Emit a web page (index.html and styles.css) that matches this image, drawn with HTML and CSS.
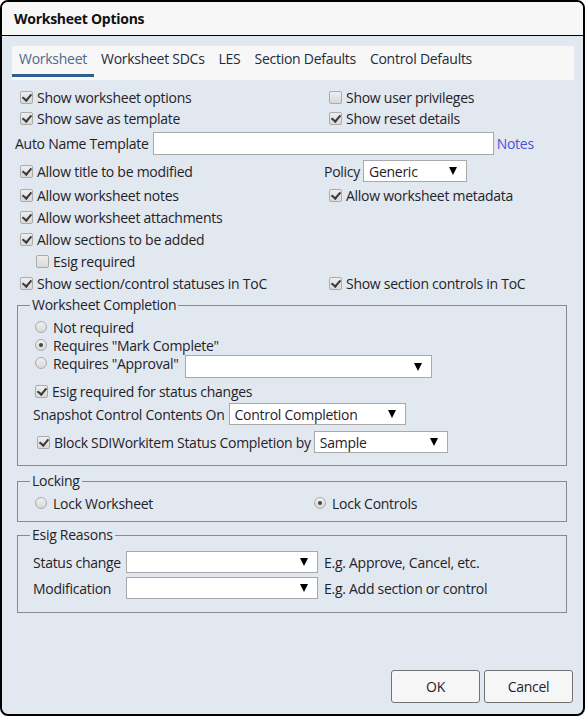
FILE: index.html
```html
<!DOCTYPE html>
<html>
<head>
<meta charset="utf-8">
<link rel="stylesheet" href="styles.css">
</head>
<body>
<div class="dialog">
  <div class="titlebar">Worksheet Options</div>
  <div class="body">
    <div class="tabs">
      <div class="tab active">Worksheet</div>
      <div class="tab">Worksheet SDCs</div>
      <div class="tab">LES</div>
      <div class="tab">Section Defaults</div>
      <div class="tab">Control Defaults</div>
    </div>

    <div class="opts">
      <div class="row r1">
        <div class="lcol"><span class="cb on"></span>Show worksheet options</div>
        <div class="rcol"><span class="cb"></span>Show user privileges</div>
      </div>
      <div class="row r2">
        <div class="lcol"><span class="cb on"></span>Show save as template</div>
        <div class="rcol"><span class="cb on"></span>Show reset details</div>
      </div>
      <div class="row autoname">
        <span class="autolabel">Auto Name Template</span>
        <span class="textbox"></span>
        <span class="link">Notes</span>
      </div>
      <div class="row r4">
        <div class="lcol"><span class="cb on"></span>Allow title to be modified</div>
        <div class="rcol plain">Policy <span class="select policy"><span class="val">Generic</span><span class="arrow"></span></span></div>
      </div>
      <div class="row">
        <div class="lcol"><span class="cb on"></span>Allow worksheet notes</div>
        <div class="rcol"><span class="cb on"></span>Allow worksheet metadata</div>
      </div>
      <div class="row">
        <div class="lcol"><span class="cb on"></span>Allow worksheet attachments</div>
      </div>
      <div class="row">
        <div class="lcol"><span class="cb on"></span>Allow sections to be added</div>
      </div>
      <div class="row">
        <div class="lcol indent"><span class="cb"></span>Esig required</div>
      </div>
      <div class="row">
        <div class="lcol"><span class="cb on"></span>Show section/control statuses in ToC</div>
        <div class="rcol"><span class="cb on"></span>Show section controls in ToC</div>
      </div>
    </div>

    <fieldset class="group completion">
      <legend>Worksheet Completion</legend>
      <div class="rrow"><span class="rb"></span>Not required</div>
      <div class="rrow"><span class="rb on"></span>Requires "Mark Complete"</div>
      <div class="rrow approval"><span class="rb"></span>Requires "Approval" <span class="select approvalsel"><span class="val"></span><span class="arrow"></span></span></div>
      <div class="crow esigstatus"><span class="cb on"></span>Esig required for status changes</div>
      <div class="crow snapshot">Snapshot Control Contents On <span class="select snapsel"><span class="val">Control Completion</span><span class="arrow"></span></span></div>
      <div class="crow block"><span class="cb on"></span>Block SDIWorkitem Status Completion by <span class="select samplesel"><span class="val">Sample</span><span class="arrow"></span></span></div>
    </fieldset>

    <fieldset class="group locking">
      <legend>Locking</legend>
      <div class="lockrow">
        <div class="lockcell"><span class="rb"></span>Lock Worksheet</div>
        <div class="lockcell"><span class="rb on"></span>Lock Controls</div>
      </div>
    </fieldset>

    <fieldset class="group reasons">
      <legend>Esig Reasons</legend>
      <div class="reasonrow">
        <span class="reasonlabel">Status change</span>
        <span class="select reasonsel"><span class="val"></span><span class="arrow"></span></span>
        <span class="hint">E.g. Approve, Cancel, etc.</span>
      </div>
      <div class="reasonrow second">
        <span class="reasonlabel">Modification</span>
        <span class="select reasonsel"><span class="val"></span><span class="arrow"></span></span>
        <span class="hint">E.g. Add section or control</span>
      </div>
    </fieldset>

    <div class="footer">
      <button class="btn">OK</button>
      <button class="btn">Cancel</button>
    </div>
  </div>
</div>
</body>
</html>
```
FILE: styles.css
```css
html, body {
  margin: 0;
  padding: 0;
  background: #ffffff;
}
* { box-sizing: border-box; }

.dialog {
  width: 585px;
  height: 716px;
  border: 2px solid #000;
  border-radius: 8px;
  overflow: hidden;
  background: #e2e8f0;
  display: flex;
  flex-direction: column;
  font-family: "Open Sans", "Noto Sans", sans-serif;
  font-size: 14px;
  letter-spacing: -0.27px;
  color: #1f2329;
}

.titlebar {
  height: 34px;
  line-height: 33px;
  background: #f7f7f7;
  border-bottom: 1px solid #000;
  padding-left: 12px;
  font-weight: bold;
  color: #111;
}

.body {
  flex: 1;
  display: flex;
  flex-direction: column;
  padding: 10px 9px 11px 10px;
}

.tabs {
  height: 34px;
  background: #f7f7f7;
  display: flex;
}
.tab {
  height: 31px;
  padding: 3px 7px 0 7px;
  line-height: 20px;
  border-bottom: 3px solid transparent;
  color: #1f2a3c;
}
.tab.active {
  color: #4e6a87;
  border-bottom-color: #2e5d90;
}

.opts {
  margin-top: 6px;
}
.row {
  display: flex;
  align-items: center;
  height: 22px;
}
.row.r2 { height: 21px; }
.row.autoname { height: 29px; }
.row.r4 { height: 26px; }

.lcol {
  width: 312px;
  flex: none;
  padding-left: 8px;
  display: flex;
  align-items: center;
}
.lcol.indent { padding-left: 24px; }
.rcol {
  padding-left: 5px;
  display: flex;
  align-items: center;
}
.rcol.plain { padding-left: 0; }

.cb {
  display: inline-block;
  position: relative;
  width: 13px;
  height: 13px;
  border: 1px solid #ababab;
  border-radius: 2px;
  background: linear-gradient(#eeeeee, #d9d9d9);
  margin-right: 4px;
  flex: none;
}
.cb.on::after {
  content: "";
  position: absolute;
  left: 3px;
  top: 0px;
  width: 4px;
  height: 7px;
  border-right: 2px solid #3a3a3a;
  border-bottom: 2px solid #3a3a3a;
  transform: rotate(40deg);
}

.rb {
  display: inline-block;
  position: relative;
  width: 12px;
  height: 12px;
  border: 1px solid #ababab;
  border-radius: 50%;
  background: linear-gradient(#efefef, #d9d9d9);
  margin-right: 6px;
  flex: none;
}
.rb.on::after {
  content: "";
  position: absolute;
  left: 3px;
  top: 3px;
  width: 4px;
  height: 4px;
  border-radius: 50%;
  background: #444;
}

.autolabel { padding-left: 3px; }
.textbox {
  display: inline-block;
  width: 341px;
  height: 23px;
  margin-left: 4px;
  background: #fff;
  border: 1px solid #a9a9a9;
}
.link {
  margin-left: 3px;
  color: #4f50d8;
}

.select {
  display: inline-flex;
  align-items: center;
  justify-content: space-between;
  height: 22px;
  background: #fff;
  border: 1px solid #a9a9a9;
  padding: 0 9px 0 5px;
  color: #1f2329;
  flex: none;
}
.arrow {
  width: 0;
  height: 0;
  border-left: 4px solid transparent;
  border-right: 4px solid transparent;
  border-top: 8px solid #000;
  flex: none;
}
.select.policy { width: 104px; margin-left: 3px; }
.select.approvalsel { width: 247px; margin-left: 6px; margin-top: 1px; height: 23px; }
.select.snapsel { width: 177px; margin-left: 4px; }
.select.samplesel { width: 134px; margin-left: 3px; padding-left: 5px; }
.select.reasonsel { width: 192px; }

.group {
  margin: 1px 7px 0 5px;
  border: 1px solid #8a8a8a;
  padding: 0 10px 12px 15px;
  min-width: 0;
}
.group legend {
  padding: 0 2px;
  margin-left: -3px;
  line-height: 20px;
}

.completion { padding-top: 3px; }
.rrow {
  display: flex;
  align-items: center;
  height: 18px;
  padding-left: 2px;
}
.rrow.approval {
  height: 24px;
  align-items: flex-start;
}
.rrow.approval .rb { margin-top: 3px; }
.crow {
  display: flex;
  align-items: center;
  height: 22px;
}
.crow.esigstatus { margin-top: 2px; padding-left: 2px; }
.crow.snapshot { margin-top: 1px; }
.crow.block { margin-top: 6px; padding-left: 4px; }

.locking {
  margin-top: 5px;
  padding-top: 1px;
  padding-bottom: 7px;
}
.lockrow {
  display: flex;
  height: 22px;
  align-items: center;
  padding-left: 2px;
}
.lockcell {
  display: flex;
  align-items: center;
  width: 279px;
  flex: none;
}

.reasons {
  margin-top: 3px;
  padding-top: 6px;
  padding-bottom: 13px;
}
.reasonrow {
  display: flex;
  align-items: center;
  height: 22px;
}
.reasonrow.second { margin-top: 4px; }
.reasonlabel { width: 93px; flex: none; }
.hint { margin-left: 6px; }

.footer {
  margin-top: auto;
  display: flex;
  justify-content: flex-end;
  gap: 4px;
  padding-right: 1px;
}
.btn {
  width: 89px;
  height: 33px;
  background: #f6f6f6;
  border: 1px solid #727272;
  border-radius: 3px;
  font-family: "Open Sans", "Noto Sans", sans-serif;
  font-size: 14px;
  letter-spacing: -0.27px;
  color: #1f2329;
  padding: 0;
}
```
